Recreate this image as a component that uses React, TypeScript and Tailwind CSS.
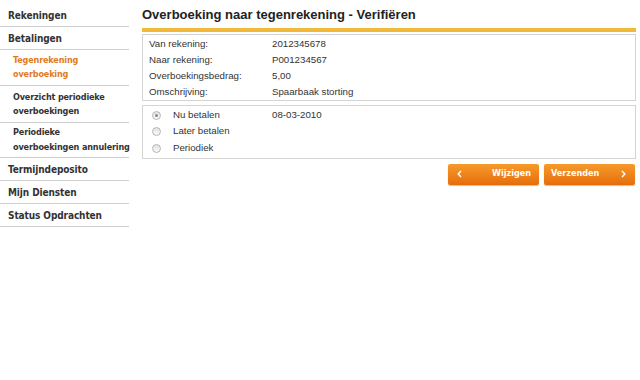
const rows = [
  { label: 'Van rekening:', value: '2012345678' },
  { label: 'Naar rekening:', value: 'P001234567' },
  { label: 'Overboekingsbedrag:', value: '5,00' },
  { label: 'Omschrijving:', value: 'Spaarbaak storting' },
]

const options = [
  { label: 'Nu betalen', date: '08-03-2010', checked: true },
  { label: 'Later betalen', date: '', checked: false },
  { label: 'Periodiek', date: '', checked: false },
]

function Radio({ checked }: { checked: boolean }) {
  return (
    <span className="w-[9px] h-[9px] rounded-full border border-[#b5b5b5] bg-gradient-to-b from-[#e2e2e2] to-[#fafafa] flex items-center justify-center">
      {checked && <span className="w-[3px] h-[3px] rounded-full bg-[#8a8a8a]" />}
    </span>
  )
}

function Chevron({ dir }: { dir: 'left' | 'right' }) {
  return (
    <svg width="5" height="8" viewBox="0 0 5 8" className="shrink-0">
      <path
        d={dir === 'left' ? 'M4 1 L1.2 4 L4 7' : 'M1 1 L3.8 4 L1 7'}
        fill="none"
        stroke="white"
        strokeWidth="1.5"
      />
    </svg>
  )
}

function Sidebar() {
  const main =
    'px-[8px] h-[23px] flex items-center text-[10px] tracking-[-0.1px] font-bold text-[#333] border-b border-[#cfcfcf]'
  const sub =
    'pl-[13px] text-[9px] tracking-[-0.15px] whitespace-nowrap font-bold leading-[14px] border-b border-[#cfcfcf]'
  return (
    <div className="w-[129px] shrink-0 font-['DejaVu_Sans_Condensed','DejaVu_Sans',sans-serif] pt-[4px]">
      <div className={main}>Rekeningen</div>
      <div className={main}>Betalingen</div>
      <div className={`${sub} text-[#e07b24] pt-[3px] pb-[4px]`}>
        Tegenrekening
        <br />
        overboeking
      </div>
      <div className={`${sub} text-[#333] pt-[4px] pb-[4px]`}>
        Overzicht periodieke
        <br />
        overboekingen
      </div>
      <div className={`${sub} text-[#333] pt-[2px] pb-[2px] leading-[15px]`}>
        Periodieke
        <br />
        overboekingen annulering
      </div>
      <div className={main}>Termijndeposito</div>
      <div className={main}>Mijn Diensten</div>
      <div className={main}>Status Opdrachten</div>
    </div>
  )
}

export default function App() {
  const btn =
    "w-[91px] h-[21px] rounded-[2px] bg-gradient-to-b from-[#f79a2a] to-[#e56d09] text-white text-[9px] font-bold font-['DejaVu_Sans_Condensed','DejaVu_Sans',sans-serif] flex items-center justify-between shadow-[0_1px_1px_rgba(0,0,0,0.25)]"
  return (
    <div className="w-[640px] h-[380px] bg-white flex font-['Liberation_Sans',Arial,sans-serif]">
      <Sidebar />
      <div className="flex-1 pl-[13px] pr-[4px] pt-[7px]">
        <h1 className="text-[13px] font-bold text-[#222] leading-[16px]">
          Overboeking naar tegenrekening - Verifiëren
        </h1>
        <div className="h-[4px] bg-[#f0b93a] mt-[5px]" />
        <div className="mt-[2px] border border-[#d4d4d4] px-[6px] pt-[1px] text-[9.7px] text-[#333]">
          {rows.map((r) => (
            <div key={r.label} className="flex h-[16px] items-center">
              <div className="w-[123px]">{r.label}</div>
              <div>{r.value}</div>
            </div>
          ))}
        </div>
        <div className="mt-[4px] border border-[#d4d4d4] px-[9px] pt-[1px] pb-[1px] text-[9.7px] text-[#333]">
          {options.map((o) => (
            <div key={o.label} className="flex h-[16.5px] items-center">
              <div className="w-[21px]">
                <Radio checked={o.checked} />
              </div>
              <div className="w-[99px]">{o.label}</div>
              <div>{o.date}</div>
            </div>
          ))}
        </div>
        <div className="mt-[5px] flex justify-end gap-[5px] pr-[1px]">
          <button className={`${btn} pl-[9px] pr-[8px]`}>
            <Chevron dir="left" />
            <span>Wijzigen</span>
          </button>
          <button className={`${btn} pl-[7px] pr-[9px]`}>
            <span>Verzenden</span>
            <Chevron dir="right" />
          </button>
        </div>
      </div>
    </div>
  )
}
